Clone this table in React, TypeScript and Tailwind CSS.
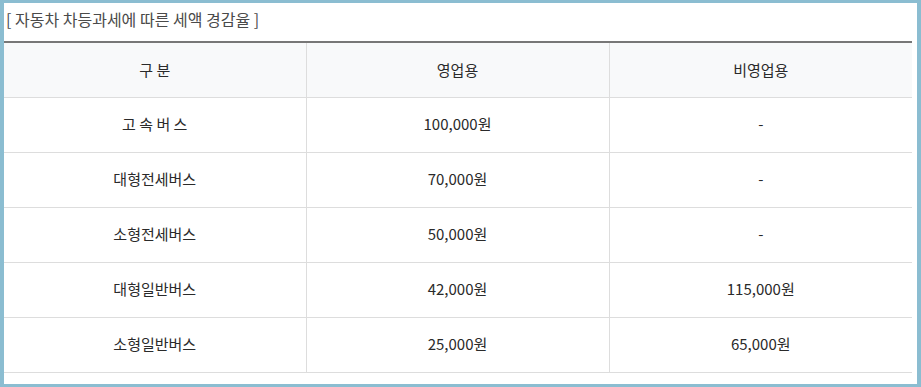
import React from 'react';

const rows = [
  { name: '고 속 버 스', biz: '100,000원', nonBiz: '-' },
  { name: '대형전세버스', biz: '70,000원', nonBiz: '-' },
  { name: '소형전세버스', biz: '50,000원', nonBiz: '-' },
  { name: '대형일반버스', biz: '42,000원', nonBiz: '115,000원' },
  { name: '소형일반버스', biz: '25,000원', nonBiz: '65,000원' },
];

const App = () => {
  return (
    <div
      className="w-[921px] h-[387px] bg-white border-l-[4px] border-t-[3px] border-r-[4px] border-b-[3px] border-[#8bbdd1] pr-[5px] flex flex-col"
      style={{ fontFamily: '"Noto Sans CJK KR", "Noto Sans", sans-serif' }}
    >
      {/* Title */}
      <div className="h-[38px] pl-[2px] pt-[4px] text-[16px] leading-[24px] text-[#4a4a4a]">
        [ 자동차 차등과세에 따른 세액 경감율 ]
      </div>

      {/* Table */}
      <table className="w-full border-collapse border-t-2 border-[#777] table-fixed text-[15px] text-[#2a2a2a]">
        <colgroup>
          <col className="w-[302px]" />
          <col className="w-[303px]" />
          <col />
        </colgroup>
        <thead>
          <tr className="bg-[#f8f9fa] h-[55px]">
            <th className="font-normal border-b border-[#ddd]">구 분</th>
            <th className="font-normal border-b border-l border-[#ddd]">영업용</th>
            <th className="font-normal border-b border-l border-[#ddd]">비영업용</th>
          </tr>
        </thead>
        <tbody>
          {rows.map((r) => (
            <tr key={r.name} className="h-[55px]">
              <td className="text-center border-b border-[#ddd]">{r.name}</td>
              <td className="text-center border-b border-l border-[#ddd]">{r.biz}</td>
              <td className="text-center border-b border-l border-[#ddd]">{r.nonBiz}</td>
            </tr>
          ))}
        </tbody>
      </table>
    </div>
  );
};

export default App;
